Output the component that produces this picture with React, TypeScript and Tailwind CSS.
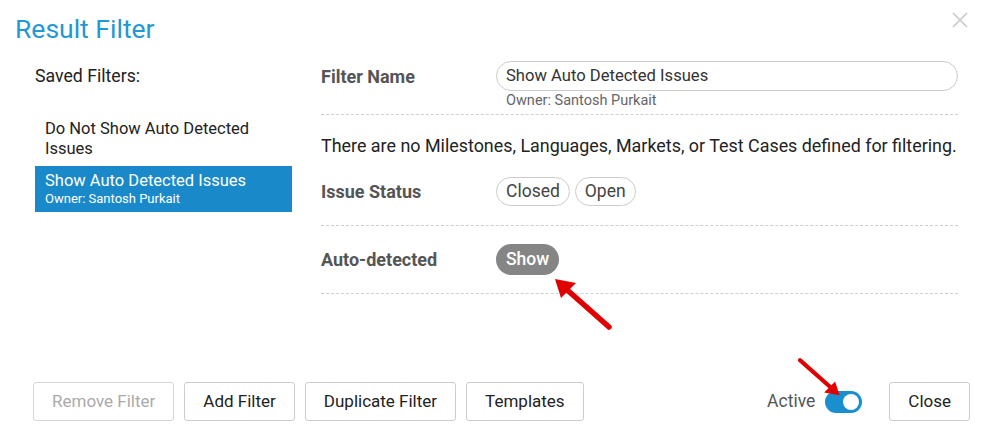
const statuses = ["Closed", "Open"];

function Arrow({ className }: { className: string }) {
  // red callout arrow, tip at top-left of its box
  return (
    <svg className={className} viewBox="0 0 60 54" fill="none">
      <line x1="56" y1="50" x2="12" y2="11" stroke="#e00000" strokeWidth="5.5" strokeLinecap="round" />
      <polygon points="2,2 23,6 8,21" fill="#e00000" />
    </svg>
  );
}

export default function App() {
  return (
    <div
      className="relative h-[435px] w-[982px] overflow-hidden bg-white text-[16px] text-[#222]"
      style={{ fontFamily: "Roboto, 'Liberation Sans', sans-serif" }}
    >
      <div className="flex items-start justify-between pl-[15px] pr-[14px] pt-[12px]">
        <h1 className="text-[26.5px] leading-[34px] text-[#1f98d4]">Result Filter</h1>
        <svg className="h-[16px] w-[16px]" viewBox="0 0 16 16">
          <path d="M1 1L15 15M15 1L1 15" stroke="#c8c8c8" strokeWidth="1.6" />
        </svg>
      </div>

      <div className="flex pt-[20px]">
        <div className="w-[286px] shrink-0 pl-[35px] text-[16.5px]">
          <p className="text-[17.7px] leading-[20px]">Saved Filters:</p>
          <ul className="mt-[33px] w-[257px]">
            <li className="px-[10px] pb-[7px] leading-[20px]">Do Not Show Auto Detected Issues</li>
            <li className="bg-[#1a89c9] px-[10px] pb-[6px] pt-[5px] text-white">
              <div className="leading-[20px]">Show Auto Detected Issues</div>
              <div className="text-[13px] leading-[15px]">Owner: Santosh Purkait</div>
            </li>
          </ul>
        </div>

        <div className="-mt-[5px] w-[672px] pl-[35px]">
          <div className="flex w-[637px] border-b border-dashed border-[#cfcfcf] pb-[5px]">
            <div className="w-[175px] pt-[2px] text-[18px] font-bold text-[#555]">Filter Name</div>
            <div className="flex-1">
              <div className="flex h-[30px] items-center rounded-full border border-[#cccccc] px-[9px] text-[16.6px] text-[#333]">
                Show Auto Detected Issues
              </div>
              <div className="pl-[10px] pt-[2px] text-[14.5px] leading-[16px] text-[#666]">
                Owner: Santosh Purkait
              </div>
            </div>
          </div>

          <p className="whitespace-nowrap pt-[20px] text-[17.9px] leading-[22px]">
            There are no Milestones, Languages, Markets, or Test Cases defined for filtering.
          </p>

          <div className="flex w-[637px] items-center border-b border-dashed border-[#cfcfcf] pb-[19px] pt-[20px]">
            <div className="w-[175px] text-[18px] font-bold text-[#555]">Issue Status</div>
            <div className="flex gap-[5px]">
              {statuses.map((s) => (
                <span
                  key={s}
                  className="rounded-full border border-[#cccccc] px-[9px] py-[3px] text-[17.5px] leading-[21px] text-[#444]"
                >
                  {s}
                </span>
              ))}
            </div>
          </div>

          <div className="flex w-[637px] items-center border-b border-dashed border-[#cfcfcf] pb-[18px] pt-[18px]">
            <div className="w-[175px] text-[18px] font-bold text-[#555]">Auto-detected</div>
            <span className="rounded-full bg-[#858585] px-[10px] py-[4px] text-[17.5px] font-medium leading-[23px] text-white">
              Show
            </span>
          </div>
        </div>
      </div>

      <div className="absolute bottom-[14px] left-[33px] right-[12px] flex items-center text-[17px]">
        <div className="flex gap-[10px]">
          <button className="h-[39px] rounded-[3px] border border-[#d6d6d6] px-[18px] text-[#aaa]">Remove Filter</button>
          <button className="h-[39px] rounded-[3px] border border-[#cccccc] px-[18px]">Add Filter</button>
          <button className="h-[39px] rounded-[3px] border border-[#cccccc] px-[18px]">Duplicate Filter</button>
          <button className="h-[39px] rounded-[3px] border border-[#cccccc] px-[18px]">Templates</button>
        </div>
        <div className="ml-auto flex items-center">
          <span className="text-[17.5px] text-[#555]">Active</span>
          <span className="ml-[10px] flex h-[22px] w-[37px] items-center justify-end rounded-full bg-[#1a8fd0] pr-[3px]">
            <span className="h-[16px] w-[16px] rounded-full bg-white" />
          </span>
          <button className="ml-[27px] h-[39px] rounded-[3px] border border-[#cccccc] px-[18px]">Close</button>
        </div>
      </div>

      <Arrow className="absolute left-[553px] top-[277px] h-[54px] w-[60px]" />
      <Arrow className="absolute left-[797px] top-[350px] h-[54px] w-[44px] -scale-x-100 -scale-y-100" />
    </div>
  );
}
